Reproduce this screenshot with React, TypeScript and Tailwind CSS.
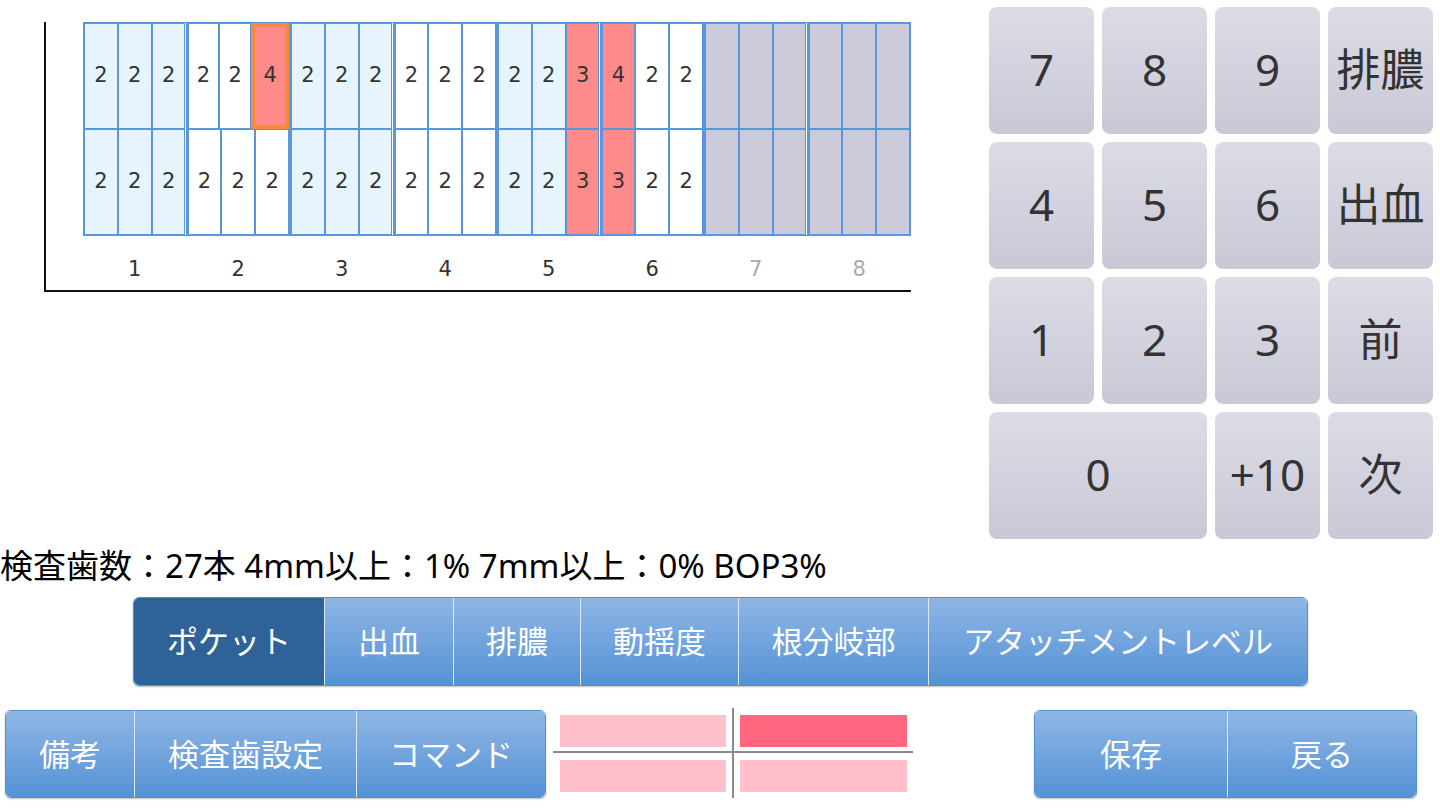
import React from "react";

type Cell = number | null;

const topRow: Cell[] = [2, 2, 2, 2, 2, 4, 2, 2, 2, 2, 2, 2, 2, 2, 3, 4, 2, 2, null, null, null, null, null, null];
const bottomRow: Cell[] = [2, 2, 2, 2, 2, 2, 2, 2, 2, 2, 2, 2, 2, 2, 3, 3, 2, 2, null, null, null, null, null, null];
const redCols = [14, 15];
const jp = { fontFamily: '"Noto Sans", "Noto Sans CJK JP", sans-serif' };

function groupBg(g: number) {
  if (g >= 6) return "bg-[#cbcad9]";
  return g % 2 === 0 ? "bg-[#e6f5fd]" : "bg-white";
}

function ToothCell({ value, index, row }: { value: Cell; index: number; row: number }) {
  const g = Math.floor(index / 3);
  const highlighted = row === 0 && index === 5;
  let cls = "flex-1 flex items-center justify-center border border-[#5b96da] " + groupBg(g);
  if (redCols.includes(index)) cls = "flex-1 flex items-center justify-center border border-[#5b96da] bg-[#ff8a8a]";
  if (highlighted) cls = "flex-1 flex items-center justify-center border-[4px] border-[#f68a42] bg-[#ff8a8a]";
  return <div className={cls}>{value ?? ""}</div>;
}

function Chart() {
  const groups = [0, 1, 2, 3, 4, 5, 6, 7];
  return (
    <div className="pl-[44px] pt-[22px]">
      <div className="w-[867px] h-[270px] border-l-2 border-b-2 border-[#111] pl-[37px]">
        <div
          className="flex w-[828px] h-[214px] text-[21px] text-[#333]"
          style={{ fontFamily: '"DejaVu Sans", sans-serif' }}
        >
          {groups.map((g) => (
            <div key={g} className="flex-1 flex flex-col border border-[#5b96da]">
              {[topRow, bottomRow].map((row, r) => (
                <div key={r} className="flex-1 flex">
                  {[0, 1, 2].map((c) => (
                    <ToothCell key={c} value={row[g * 3 + c]} index={g * 3 + c} row={r} />
                  ))}
                </div>
              ))}
            </div>
          ))}
        </div>
        <div
          className="flex w-[828px] pt-[23px] text-[21px] leading-none"
          style={{ fontFamily: '"DejaVu Sans", sans-serif' }}
        >
          {groups.map((g) => (
            <div key={g} className={"flex-1 text-center " + (g >= 6 ? "text-[#aaa]" : "text-[#333]")}>
              {g + 1}
            </div>
          ))}
        </div>
      </div>
    </div>
  );
}

function Keypad() {
  const keys: { label: string; wide?: boolean }[] = [
    { label: "7" }, { label: "8" }, { label: "9" }, { label: "排膿" },
    { label: "4" }, { label: "5" }, { label: "6" }, { label: "出血" },
    { label: "1" }, { label: "2" }, { label: "3" }, { label: "前" },
    { label: "0", wide: true }, { label: "+10" }, { label: "次" },
  ];
  return (
    <div className="pt-[7px] pr-[7px]">
      <div className="grid grid-cols-[105px_105px_105px_105px] grid-rows-[127px_127px_127px_127px] gap-x-[8px] gap-y-[8px]">
        {keys.map((k) => (
          <button
            key={k.label}
            className={
              "rounded-[8px] bg-linear-to-b from-[#dcdce6] to-[#c9c8d6] text-[#333] text-[44px] pb-[4px] flex items-center justify-center " +
              (k.wide ? "col-span-2" : "")
            }
            style={jp}
          >
            {k.label}
          </button>
        ))}
      </div>
    </div>
  );
}

function Segmented({ items, active }: { items: { label: string; w: string }[]; active?: number }) {
  return (
    <div className="flex h-full rounded-[6px] overflow-hidden border border-[#5590d3] shadow-[0_1px_2px_rgba(0,0,0,0.25)]">
      {items.map((it, i) => (
        <div
          key={it.label}
          className={
            it.w +
            " h-full flex items-center justify-center text-white text-[31px] " +
            (i > 0 ? "border-l border-[#dbe8f6] " : "") +
            (i === active ? "bg-[#2f6397]" : "bg-linear-to-b from-[#8eb6e4] to-[#5592d6]")
          }
          style={jp}
        >
          {it.label}
        </div>
      ))}
    </div>
  );
}

function Crosshair() {
  return (
    <div className="relative w-[360px] h-[90px] pl-[7px] pt-[7px]">
      <div className="grid grid-cols-[166px_167px] grid-rows-[32px_32px] gap-x-[14px] gap-y-[13px]">
        <div className="bg-[#ffc0cb]" />
        <div className="bg-[#ff6680]" />
        <div className="bg-[#ffc0cb]" />
        <div className="bg-[#ffc0cb]" />
      </div>
      <div className="absolute left-0 top-[43px] w-[360px] h-[2px] bg-[#8a8a8a]" />
      <div className="absolute left-[179px] top-0 w-[2px] h-[90px] bg-[#8a8a8a]" />
    </div>
  );
}

export default function App() {
  return (
    <div className="w-[1440px] h-[810px] bg-white overflow-hidden flex flex-col">
      <div className="h-[545px] flex justify-between">
        <Chart />
        <Keypad />
      </div>

      <div className="h-[40px] flex items-center text-[33px] text-black leading-none" style={jp}>
        検査歯数：27本 4mm以上：1% 7mm以上：0% BOP3%
      </div>

      <div className="mt-[12px] h-[89px] pl-[133px]">
        <div className="w-[1175px] h-full">
          <Segmented
            active={0}
            items={[
              { label: "ポケット", w: "w-[190px]" },
              { label: "出血", w: "w-[129px]" },
              { label: "排膿", w: "w-[127px]" },
              { label: "動揺度", w: "w-[158px]" },
              { label: "根分岐部", w: "w-[190px]" },
              { label: "アタッチメントレベル", w: "flex-1" },
            ]}
          />
        </div>
      </div>

      <div className="mt-[24px] h-[88px] flex pl-[5px]">
        <div className="w-[541px] h-full">
          <Segmented
            items={[
              { label: "備考", w: "w-[128px]" },
              { label: "検査歯設定", w: "w-[222px]" },
              { label: "コマンド", w: "flex-1" },
            ]}
          />
        </div>
        <div className="ml-[7px] -mt-[2px]">
          <Crosshair />
        </div>
        <div className="ml-[121px] w-[383px] h-full">
          <Segmented
            items={[
              { label: "保存", w: "w-[192px]" },
              { label: "戻る", w: "flex-1" },
            ]}
          />
        </div>
      </div>
    </div>
  );
}
